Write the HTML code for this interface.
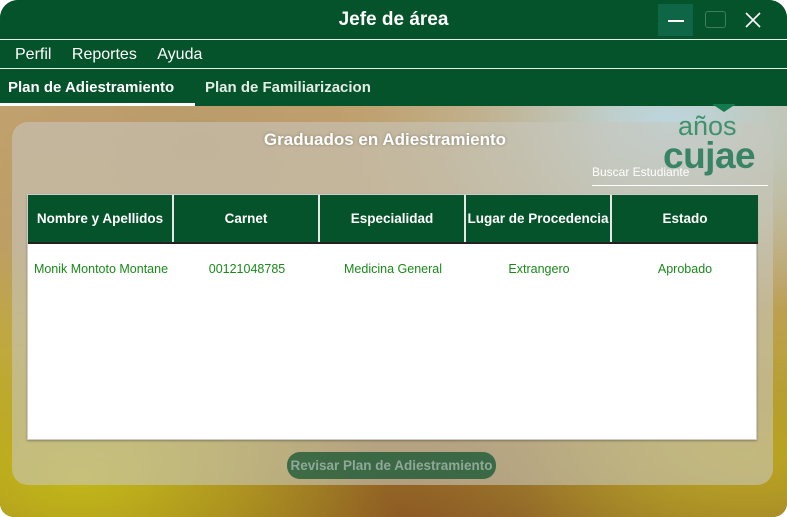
<!DOCTYPE html>
<html><head><meta charset="utf-8"><style>
*{margin:0;padding:0;box-sizing:border-box}
body{width:787px;height:517px;overflow:hidden;font-family:"Liberation Sans",sans-serif;background:#fff;position:relative}
.win{position:absolute;left:0;top:0;width:787px;height:517px;border-radius:18px 18px 14px 14px;overflow:hidden;background:#05542a}
.title{position:absolute;top:0;left:0;width:787px;height:39px;background:#05532a;color:#fff;font-weight:bold;font-size:19px;text-align:center;line-height:40px}
.min{position:absolute;left:658px;top:4px;width:35px;height:32px;background:#0e6647}
.min i{position:absolute;left:10px;top:16px;width:16px;height:2px;background:#fff}
.max{position:absolute;left:705px;top:11px;width:21px;height:17px;border:1.5px solid #3f7e5c;border-radius:3px;background:transparent}
.line{position:absolute;left:0;width:787px;height:1px;background:#e8efe9}
.menu{position:absolute;top:40px;left:0;width:787px;height:28px;background:#05532a;color:#fff;font-size:16px;line-height:29px}
.menu span{margin-left:15px;margin-right:1px}
.tabs{position:absolute;top:69px;left:0;width:787px;height:37px;background:#05532a;color:#fff;font-weight:bold;font-size:15px}
.bg{position:absolute;top:106px;left:0;width:787px;height:411px;
background:
radial-gradient(ellipse at 10% 90%,rgba(200,190,20,.9),transparent 45%),
radial-gradient(ellipse at 95% 85%,rgba(190,170,30,.9),transparent 35%),
radial-gradient(ellipse at 50% 100%,#7a3b2a,transparent 50%),
radial-gradient(ellipse at 25% 10%,#b99a6a,transparent 50%),
radial-gradient(ellipse at 85% 5%,#bcd7e0,transparent 35%),
linear-gradient(#c9a871,#b99c55 60%,#8d6a30)}
.card{position:absolute;left:12px;top:122px;width:761px;height:363px;border-radius:16px;background:rgba(200,198,188,.6)}
.gh{position:absolute;top:130px;left:0;width:770px;text-align:center;color:#fff;font-weight:bold;font-size:17px;text-shadow:0 0 3px rgba(0,0,0,.3)}
.anos{position:absolute;left:678px;top:113px;color:#3e9270;font-size:27px;line-height:1}
.cujae{position:absolute;left:663px;top:137px;color:#3a8466;font-size:37px;font-weight:bold;line-height:1;letter-spacing:-0.5px}
.search{position:absolute;left:592px;top:165px;width:176px;height:21px;border-bottom:1.5px solid #fff;color:#fff;font-size:12px}
.table{position:absolute;left:27px;top:194px;width:730px;height:246px;background:#fff;border:1px solid #ccc;box-shadow:0 1px 2px rgba(0,0,0,.3)}
.hd{position:absolute;top:0;left:0;width:730px;height:49px;background:#05532a;border-bottom:2px solid #222;display:flex}
.hd div{width:146px;border-right:2px solid #e6e6e6;color:#fff;font-weight:bold;font-size:13.5px;text-align:center;line-height:48px}
.row{position:absolute;top:67px;left:0;width:730px;display:flex}
.row div{width:146px;text-align:center;color:#1a8a1a;font-size:12.5px}
.btn{position:absolute;left:287px;top:452px;width:209px;height:27px;border-radius:13px;background:rgba(20,85,50,.75);color:#8fa898;font-weight:bold;font-size:13.5px;text-align:center;line-height:27px}
</style></head><body>
<div class="win">
<div class="bg"></div>
<div class="title">Jefe de área</div>
<div class="min"><i></i></div><div class="max"></div>
<svg style="position:absolute;left:745px;top:12px" width="16" height="16"><path d="M1 1L15 15M15 1L1 15" stroke="#fff" stroke-width="1.6"/></svg>
<div class="line" style="top:39px"></div>
<div class="menu"><span>Perfil</span> <span>Reportes</span> <span>Ayuda</span></div>
<div class="line" style="top:68px"></div>
<div class="tabs"><span style="position:absolute;left:8px;top:10px">Plan de Adiestramiento</span><span style="position:absolute;left:205px;top:10px;color:#e4ece6">Plan de Familiarizacion</span><div style="position:absolute;left:0;top:34px;width:195px;height:3px;background:#fff"></div></div>
<div style="position:absolute;left:712px;top:104px;width:24px;height:8px;background:#137a4e;clip-path:polygon(0 0,100% 0,50% 100%)"></div>
<div class="card"></div>
<div class="anos">años</div><div class="cujae">cujae</div>
<div class="gh">Graduados en Adiestramiento</div>
<div class="search">Buscar Estudiante</div>
<div class="table">
<div class="hd"><div>Nombre y Apellidos</div><div>Carnet</div><div>Especialidad</div><div>Lugar de Procedencia</div><div style="border:none">Estado</div></div>
<div class="row"><div>Monik Montoto Montane</div><div>00121048785</div><div>Medicina General</div><div>Extrangero</div><div>Aprobado</div></div>
</div>
<div class="btn">Revisar Plan de Adiestramiento</div>
</div>
</body></html>
